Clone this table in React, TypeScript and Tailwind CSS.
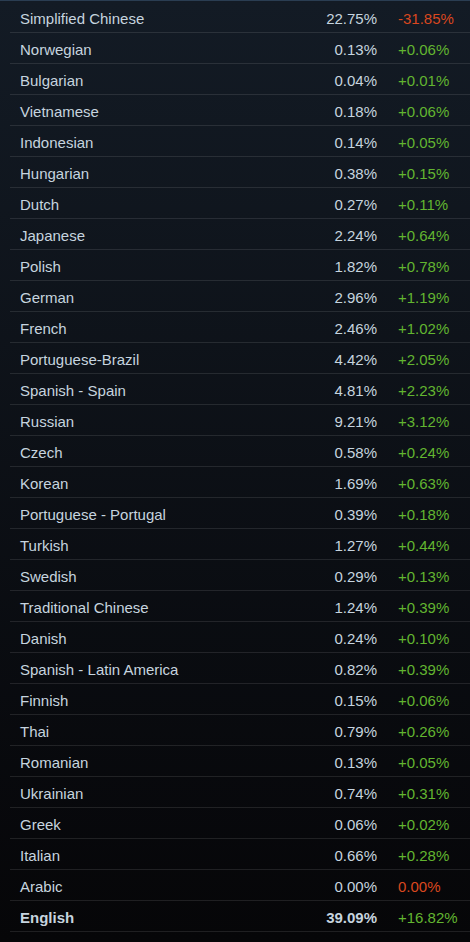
import React from 'react';

type Row = { name: string; pct: string; change: string; bold?: boolean };

const ROWS: Row[] = [
  { name: 'Simplified Chinese', pct: '22.75%', change: '-31.85%' },
  { name: 'Norwegian', pct: '0.13%', change: '+0.06%' },
  { name: 'Bulgarian', pct: '0.04%', change: '+0.01%' },
  { name: 'Vietnamese', pct: '0.18%', change: '+0.06%' },
  { name: 'Indonesian', pct: '0.14%', change: '+0.05%' },
  { name: 'Hungarian', pct: '0.38%', change: '+0.15%' },
  { name: 'Dutch', pct: '0.27%', change: '+0.11%' },
  { name: 'Japanese', pct: '2.24%', change: '+0.64%' },
  { name: 'Polish', pct: '1.82%', change: '+0.78%' },
  { name: 'German', pct: '2.96%', change: '+1.19%' },
  { name: 'French', pct: '2.46%', change: '+1.02%' },
  { name: 'Portuguese-Brazil', pct: '4.42%', change: '+2.05%' },
  { name: 'Spanish - Spain', pct: '4.81%', change: '+2.23%' },
  { name: 'Russian', pct: '9.21%', change: '+3.12%' },
  { name: 'Czech', pct: '0.58%', change: '+0.24%' },
  { name: 'Korean', pct: '1.69%', change: '+0.63%' },
  { name: 'Portuguese - Portugal', pct: '0.39%', change: '+0.18%' },
  { name: 'Turkish', pct: '1.27%', change: '+0.44%' },
  { name: 'Swedish', pct: '0.29%', change: '+0.13%' },
  { name: 'Traditional Chinese', pct: '1.24%', change: '+0.39%' },
  { name: 'Danish', pct: '0.24%', change: '+0.10%' },
  { name: 'Spanish - Latin America', pct: '0.82%', change: '+0.39%' },
  { name: 'Finnish', pct: '0.15%', change: '+0.06%' },
  { name: 'Thai', pct: '0.79%', change: '+0.26%' },
  { name: 'Romanian', pct: '0.13%', change: '+0.05%' },
  { name: 'Ukrainian', pct: '0.74%', change: '+0.31%' },
  { name: 'Greek', pct: '0.06%', change: '+0.02%' },
  { name: 'Italian', pct: '0.66%', change: '+0.28%' },
  { name: 'Arabic', pct: '0.00%', change: '0.00%' },
  { name: 'English', pct: '39.09%', change: '+16.82%', bold: true },
];

export default function App() {
  return (
    <div
      className="w-[470px] h-[942px] overflow-hidden border-t border-[#2a3d52] bg-gradient-to-b from-[#131b25] to-[#060608] text-[15px] text-[#c6d4df]"
      style={{ fontFamily: '"Liberation Sans", Arial, sans-serif' }}
    >
      {ROWS.map((r, i) => {
        const up = r.change.startsWith('+');
        return (
          <div
            key={r.name}
            className={`ml-[10px] flex border-b border-white/10 pl-[10px] leading-[20px] ${
              i === 0 ? 'h-[32px] pt-[8px]' : 'h-[31px] pt-[7px]'
            } ${r.bold ? 'font-bold' : ''}`}
          >
            <span className="flex-1 whitespace-nowrap">{r.name}</span>
            <span className="w-[80px] text-right">{r.pct}</span>
            <span
              className={`ml-[21px] w-[72px] font-normal ${
                up ? 'text-[#62b530]' : 'text-[#d9471f]'
              }`}
            >
              {r.change}
            </span>
          </div>
        );
      })}
    </div>
  );
}
